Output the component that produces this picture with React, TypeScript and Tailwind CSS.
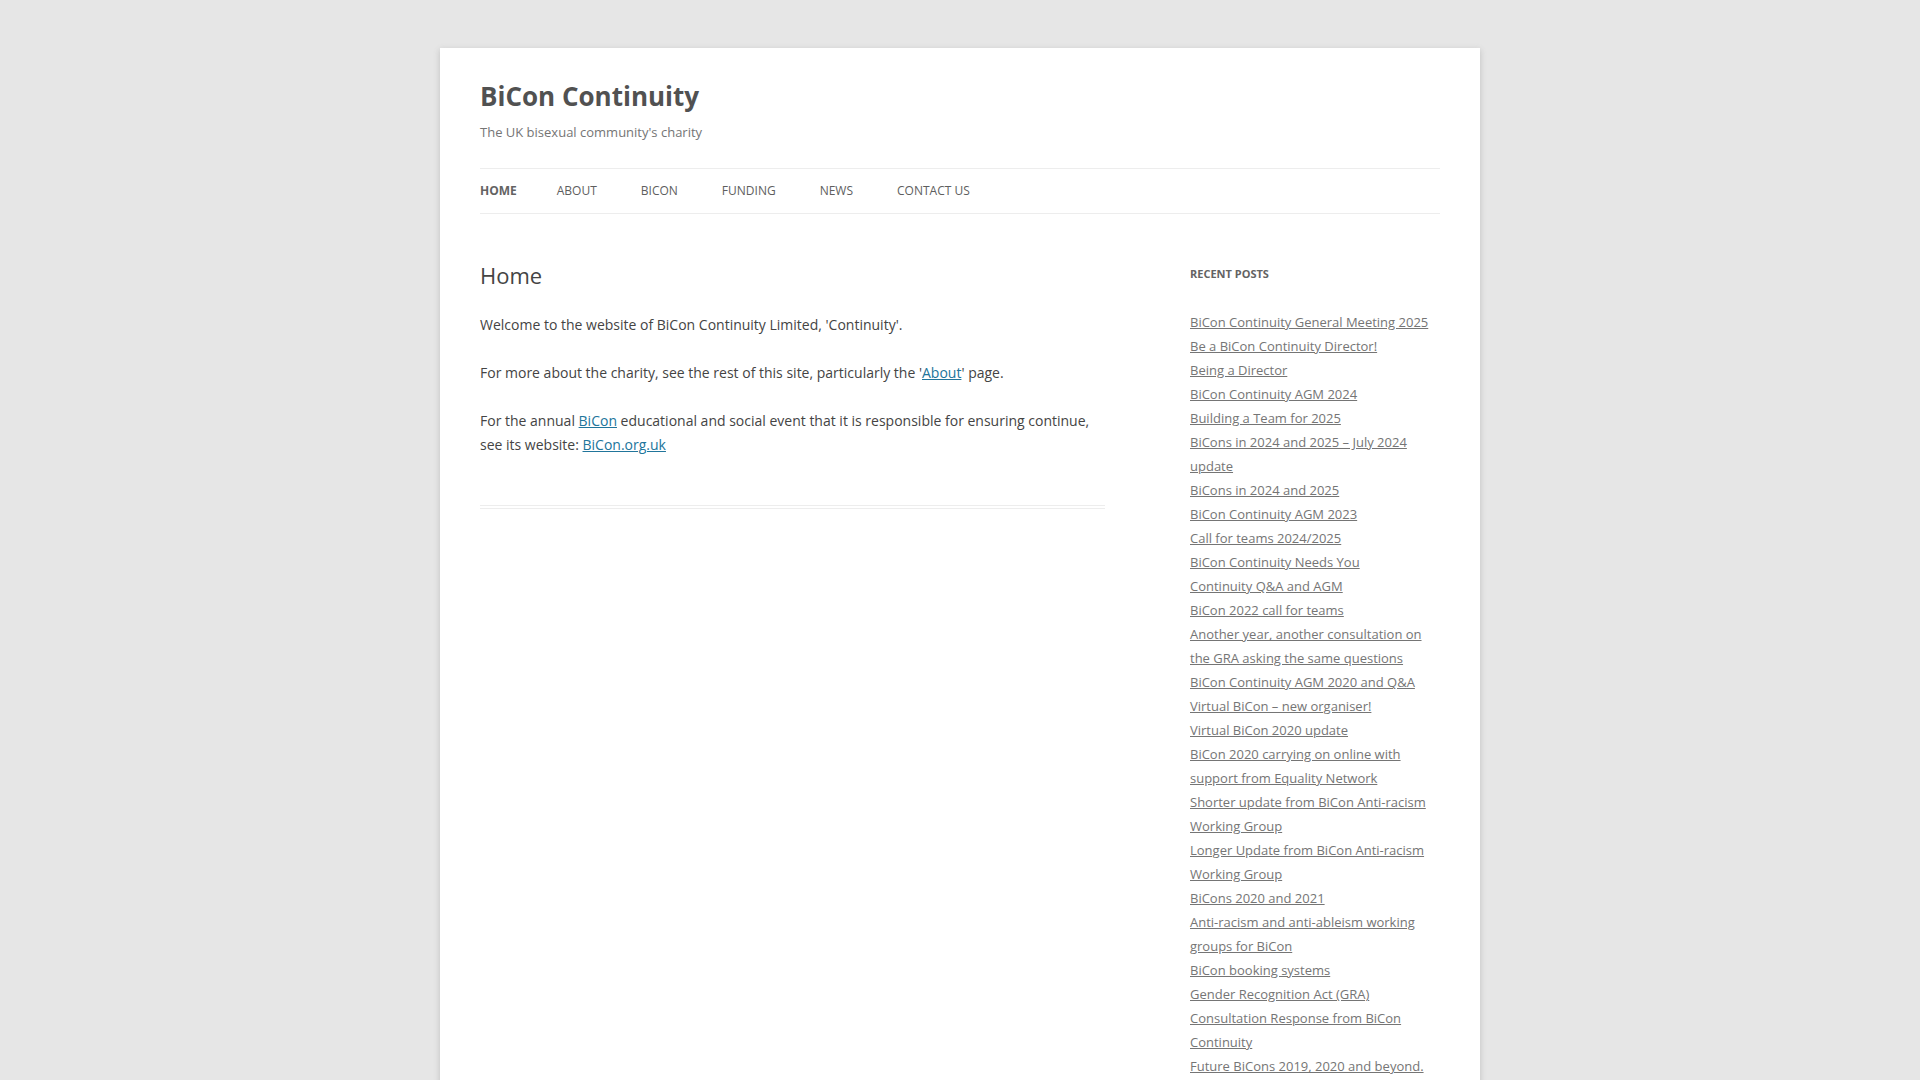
const navItems = ['Home', 'About', 'BiCon', 'Funding', 'News', 'Contact Us'];

const recentPosts = [
  'BiCon Continuity General Meeting 2025',
  'Be a BiCon Continuity Director!',
  'Being a Director',
  'BiCon Continuity AGM 2024',
  'Building a Team for 2025',
  'BiCons in 2024 and 2025 – July 2024 update',
  'BiCons in 2024 and 2025',
  'BiCon Continuity AGM 2023',
  'Call for teams 2024/2025',
  'BiCon Continuity Needs You',
  'Continuity Q&A and AGM',
  'BiCon 2022 call for teams',
  'Another year, another consultation on the GRA asking the same questions',
  'BiCon Continuity AGM 2020 and Q&A',
  'Virtual BiCon – new organiser!',
  'Virtual BiCon 2020 update',
  'BiCon 2020 carrying on online with support from Equality Network',
  'Shorter update from BiCon Anti-racism Working Group',
  'Longer Update from BiCon Anti-racism Working Group',
  'BiCons 2020 and 2021',
  'Anti-racism and anti-ableism working groups for BiCon',
  'BiCon booking systems',
  'Gender Recognition Act (GRA) Consultation Response from BiCon Continuity',
  'Future BiCons 2019, 2020 and beyond.',
];

export default function App() {
  return (
    <div className="min-h-screen bg-[#e6e6e6] pt-12 pb-12 font-['Open_Sans',Helvetica,Arial,sans-serif] text-[#444]">
      <div className="mx-auto max-w-[1040px] bg-white px-10 shadow-[0_2px_6px_rgba(100,100,100,0.3)]">
        <header className="py-6">
          <hgroup>
            <h1 className="text-[26px] font-bold leading-[48px] text-[#515151]">
              <a href="#">BiCon Continuity</a>
            </h1>
            <h2 className="text-[13px] font-normal leading-[24px] text-[#757575]">
              The UK bisexual community's charity
            </h2>
          </hgroup>

          <nav className="mt-6">
            <ul className="flex border-y border-[#ededed]">
              {navItems.map((item, i) => (
                <li key={item} className={i === 0 ? 'mr-10' : 'mr-[44px]'}>
                  <a
                    href="#"
                    className={`block text-[12px] uppercase leading-[44.3px] ${
                      i === 0 ? 'font-bold text-[#636363]' : 'text-[#5e5e5e]'
                    }`}
                  >
                    {item}
                  </a>
                </li>
              ))}
            </ul>
          </nav>
        </header>

        <div className="flex justify-between pb-12">
          <main className="mt-6 w-[625px]">
            <article className="border-b-4 border-double border-[#ededed] pb-6">
              <header className="mb-6">
                <h1 className="text-[22px] font-normal leading-[26.4px]">Home</h1>
              </header>
              <div className="text-[14px] leading-[24px]">
                <p className="mb-6">Welcome to the website of BiCon Continuity Limited, 'Continuity'.</p>
                <p className="mb-6">
                  For more about the charity, see the rest of this site, particularly the '
                  <a href="#" className="text-[#21759b] underline">About</a>' page.
                </p>
                <p className="mb-6">
                  For the annual <a href="#" className="text-[#21759b] underline">BiCon</a> educational and
                  social event that it is responsible for ensuring continue, see its website:{' '}
                  <a href="#" className="text-[#21759b] underline">BiCon.org.uk</a>
                </p>
              </div>
            </article>
          </main>

          <aside className="mt-6 w-[250px]">
            <h3 className="mb-6 text-[11px] font-bold uppercase leading-[24px] text-[#636363]">
              Recent Posts
            </h3>
            <ul>
              {recentPosts.map((post) => (
                <li key={post} className="text-[13px] leading-[24px]">
                  <a href="#" className="text-[#757575] underline">
                    {post}
                  </a>
                </li>
              ))}
            </ul>
          </aside>
        </div>
      </div>
    </div>
  );
}
